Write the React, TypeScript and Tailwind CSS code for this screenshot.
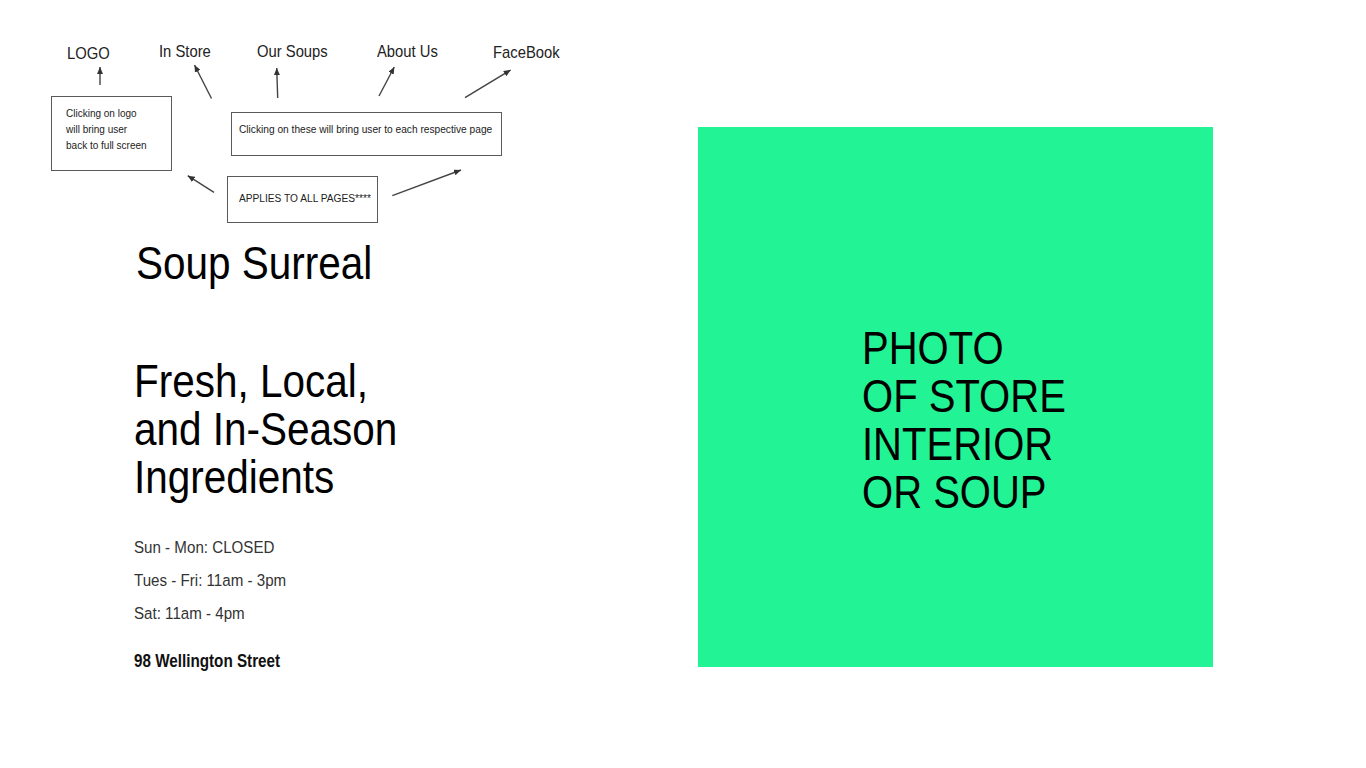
import React from "react";

const arrows: [number, number, number, number][] = [
  [100, 85, 100, 67],
  [211.5, 98.5, 194.5, 65],
  [277.7, 98, 276.7, 68],
  [379, 96, 394.3, 67],
  [465, 97.7, 510.7, 70],
  [214, 192.3, 187.7, 175.7],
  [392.3, 195.7, 461, 170],
];

function Sq({ children, className = "" }: { children: React.ReactNode; className?: string }) {
  return <div className={"origin-left scale-x-[0.87] whitespace-nowrap " + className}>{children}</div>;
}

function Sq2({ children }: { children: React.ReactNode }) {
  return <div className="origin-left scale-x-[0.88] whitespace-nowrap">{children}</div>;
}

export default function App() {
  return (
    <div className="w-[1366px] h-[768px] bg-white flex overflow-hidden font-['Liberation_Sans',Arial,sans-serif] text-black">
      <div className="w-[698px] shrink-0 flex flex-col">
        {/* wireframe annotation diagram */}
        <div className="relative h-[239px] shrink-0 text-[#222]">
          <div className="absolute left-[66.5px] top-[45px] text-[17px] leading-[17px]"><Sq>LOGO</Sq></div>
          <div className="absolute left-[159px] top-[43px] text-[17px] leading-[17px]"><Sq>In Store</Sq></div>
          <div className="absolute left-[256.5px] top-[43px] text-[17px] leading-[17px]"><Sq>Our Soups</Sq></div>
          <div className="absolute left-[377px] top-[43px] text-[17px] leading-[17px]"><Sq>About Us</Sq></div>
          <div className="absolute left-[492.5px] top-[44px] text-[17px] leading-[17px]"><Sq>FaceBook</Sq></div>

          <div className="absolute left-[51px] top-[96px] w-[121px] h-[75px] border-[1.5px] border-[#5a5a5a] pt-[8px] pl-[14px] text-[11.5px] leading-[16px]">
            <Sq>
              Clicking on logo
              <br />
              will bring user
              <br />
              back to full screen
            </Sq>
          </div>
          <div className="absolute left-[231px] top-[112px] w-[271px] h-[44px] border-[1.5px] border-[#5a5a5a] pt-[8px] pl-[7px] text-[11.7px] leading-[16px]">
            <Sq>Clicking on these will bring user to each respective page</Sq>
          </div>
          <div className="absolute left-[227px] top-[176px] w-[151px] h-[47px] border-[1.5px] border-[#5a5a5a] pt-[12.5px] pl-[11px] text-[11.7px] leading-[16px]">
            <Sq>APPLIES TO ALL PAGES****</Sq>
          </div>

          <svg className="absolute inset-0 pointer-events-none" width="698" height="239" viewBox="0 0 698 239">
            <defs>
              <marker id="ah" markerUnits="userSpaceOnUse" markerWidth="7" markerHeight="6" refX="7" refY="3" orient="auto">
                <path d="M0,0 L7,3 L0,6 z" fill="#333" />
              </marker>
            </defs>
            {arrows.map(([x1, y1, x2, y2], i) => (
              <line key={i} x1={x1} y1={y1} x2={x2} y2={y2} stroke="#444" strokeWidth="1.4" markerEnd="url(#ah)" />
            ))}
          </svg>
        </div>

        {/* main content */}
        <div className="pl-[134px] flex flex-col">
          <div className="ml-[2px] text-[46px] leading-[48px]"><Sq2>Soup Surreal</Sq2></div>
          <div className="mt-[70px] text-[46px] leading-[48px]">
            <Sq2>
              Fresh, Local,
              <br />
              and In-Season
              <br />
              Ingredients
            </Sq2>
          </div>
          <div className="mt-[30px] text-[17.4px] leading-[33px] text-[#333]">
            <Sq>Sun - Mon: CLOSED</Sq>
            <Sq>Tues - Fri: 11am - 3pm</Sq>
            <Sq>Sat: 11am - 4pm</Sq>
          </div>
          <div className="mt-[21px] text-[17.5px] leading-[20px] font-bold text-[#111]">
            <Sq>98 Wellington Street</Sq>
          </div>
        </div>
      </div>

      <div className="pt-[127px]">
        <div className="w-[515px] h-[540px] bg-[#22f496] pl-[164px] pt-[197px] text-[46px] leading-[48px] text-black">
          <Sq>
            PHOTO
            <br />
            OF STORE
            <br />
            INTERIOR
            <br />
            OR SOUP
          </Sq>
        </div>
      </div>
    </div>
  );
}
